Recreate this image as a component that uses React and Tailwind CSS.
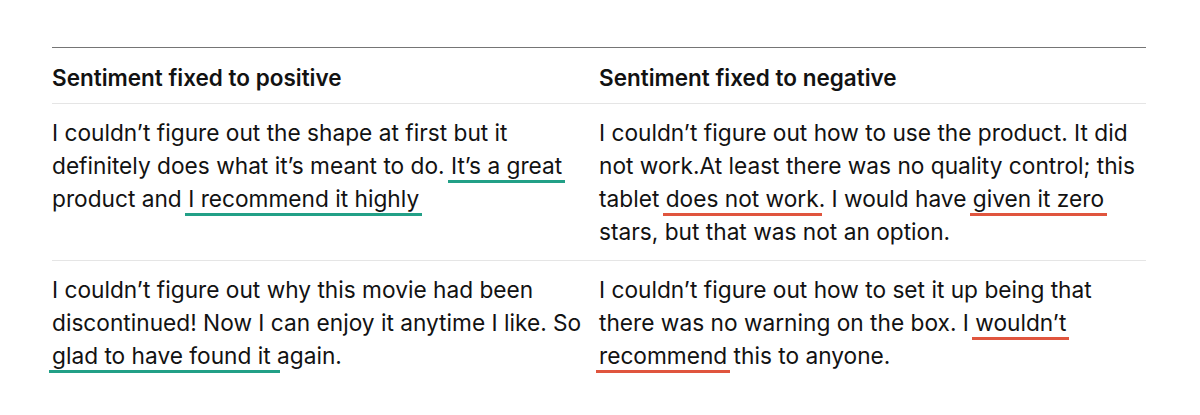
import React from "react";

const T = ({ children }) => (
  <span className="-mx-[3px] px-[3px] pb-[4px] bg-[linear-gradient(#22a087,#22a087)] bg-no-repeat bg-bottom bg-[length:100%_3px]">
    {children}
  </span>
);
const R = ({ children }) => (
  <span className="-mx-[3px] px-[3px] pb-[4px] bg-[linear-gradient(#e0553e,#e0553e)] bg-no-repeat bg-bottom bg-[length:100%_3px]">
    {children}
  </span>
);

export default function App() {
  return (
    <div className="w-[1200px] h-[415px] bg-white pt-[47px] px-[52px] text-[#121212] font-['Inter',sans-serif]">
      <div className="w-[1094px] border-t border-[#757575]">
        <div className="grid grid-cols-2 border-b border-[#e5e5e5] text-[22.5px] leading-[33px] font-semibold">
          <div className="pt-[13px] pb-[9px]">Sentiment fixed to positive</div>
          <div className="pt-[13px] pb-[9px]">Sentiment fixed to negative</div>
        </div>
        <div className="grid grid-cols-2 border-b border-[#e5e5e5] text-[22.7px] leading-[33px]">
          <div className="py-[12px] pr-2">
            I couldn’t figure out the shape at first but it
            <br />
            definitely does what it’s meant to do. <T>It’s a great</T>
            <br />
            product and <T>I recommend it highly</T>
          </div>
          <div className="py-[12px]">
            I couldn’t figure out how to use the product. It did
            <br />
            not work.At least there was no quality control; this
            <br />
            tablet <R>does not work</R>. I would have <R>given it zero</R>
            <br />
            stars, but that was not an option.
          </div>
        </div>
        <div className="grid grid-cols-2 text-[22.7px] leading-[33px]">
          <div className="py-[12px] pr-2">
            I couldn’t figure out why this movie had been
            <br />
            discontinued! Now I can enjoy it anytime I like. So
            <br />
            <T>glad to have found it </T>again.
          </div>
          <div className="py-[12px]">
            I couldn’t figure out how to set it up being that
            <br />
            there was no warning on the box. I <R>wouldn’t</R>
            <br />
            <R>recommend</R> this to anyone.
          </div>
        </div>
      </div>
    </div>
  );
}
